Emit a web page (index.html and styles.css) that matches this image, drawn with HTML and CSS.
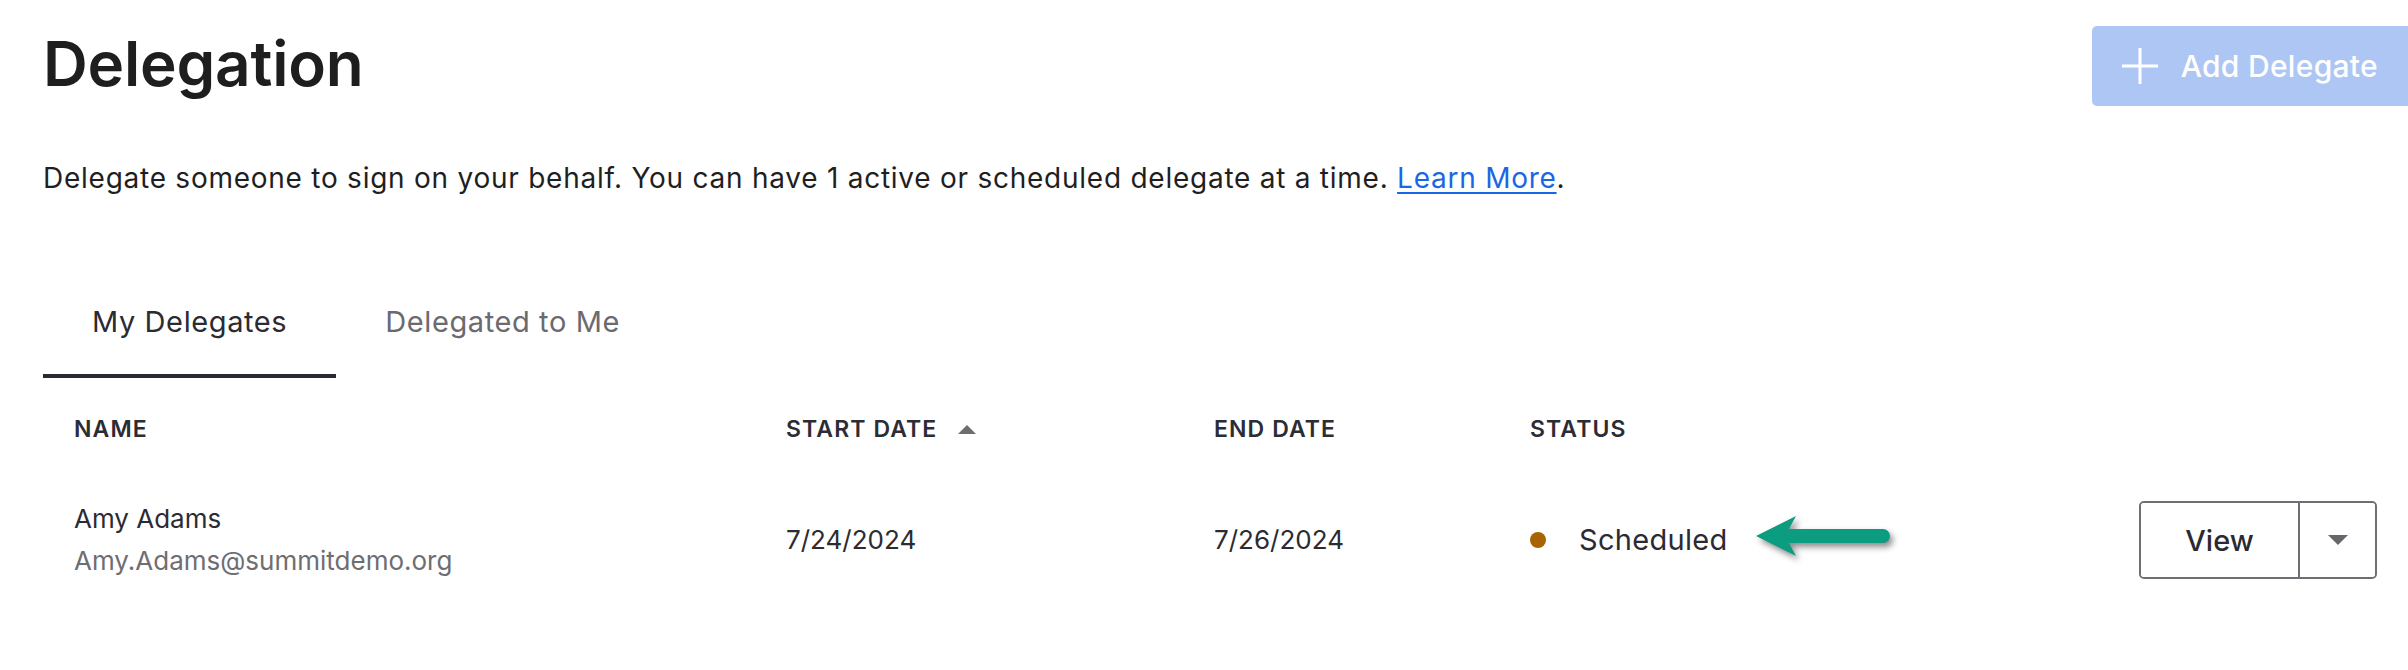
FILE: index.html
```html
<!DOCTYPE html>
<html lang="en">
<head>
<meta charset="utf-8">
<title>Delegation</title>
<link rel="stylesheet" href="styles.css">
</head>
<body>
<div class="page">
  <header class="top">
    <h1 class="title">Delegation</h1>
    <button class="add-btn" type="button">
      <svg class="plus" width="36" height="36" viewBox="0 0 36 36" aria-hidden="true"><path d="M18 0V36M0 18H36" stroke="#fff" stroke-width="3" fill="none"/></svg>
      <span>Add Delegate</span>
    </button>
  </header>

  <p class="intro">Delegate someone to sign on your behalf. You can have 1 active or scheduled delegate at a time. <a href="#">Learn More</a>.</p>

  <nav class="tabs">
    <div class="tab active">My Delegates</div>
    <div class="tab">Delegated to Me</div>
  </nav>

  <div class="table">
    <div class="thead">
      <div class="cell first">Name</div>
      <div class="cell sort">Start Date
        <svg class="sort-icon" width="18" height="9" viewBox="0 0 18 9" aria-hidden="true"><path d="M9 0L18 9H0Z" fill="#6e6e72"/></svg>
      </div>
      <div class="cell">End Date</div>
      <div class="cell">Status</div>
      <div class="cell"></div>
      <div class="cell"></div>
    </div>
    <div class="trow">
      <div class="cell first person">
        <div class="pname">Amy Adams</div>
        <div class="pmail">Amy.Adams@summitdemo.org</div>
      </div>
      <div class="cell">7/24/2024</div>
      <div class="cell">7/26/2024</div>
      <div class="cell status">
        <span class="dot"></span>
        <span class="status-text">Scheduled</span>
        <svg class="arrow" width="150" height="64" viewBox="0 0 150 64" aria-hidden="true"><path d="M4 28L44 8L37 21H131A7 7 0 0 1 131 35H37L44 48Z" fill="#0c9c7f"/></svg>
      </div>
      <div class="cell"></div>
      <div class="cell actions">
        <div class="split">
          <button class="split-main" type="button">View</button>
          <button class="split-caret" type="button" aria-label="More"><svg width="20" height="10" viewBox="0 0 20 10" aria-hidden="true"><path d="M0 0H20L10 10Z" fill="#66666b"/></svg></button>
        </div>
      </div>
    </div>
  </div>
</div>
</body>
</html>
```
FILE: styles.css
```css
html, body {
  margin: 0;
  padding: 0;
  background: #ffffff;
  overflow: hidden;
}

body {
  font-family: Inter, "Liberation Sans", sans-serif;
  color: #2b2b33;
}

.page {
  padding-left: 43px;
}

.top {
  display: flex;
  justify-content: space-between;
  align-items: flex-start;
  padding-top: 26px;
}

.title {
  margin: 0;
  font-size: 62px;
  font-weight: 600;
  line-height: 75px;
  color: #1e1e1e;
  letter-spacing: -0.2px;
}

.add-btn {
  display: flex;
  align-items: center;
  gap: 23px;
  height: 80px;
  padding: 0 36px 0 30px;
  margin-right: -6px;
  border: 0;
  border-radius: 5px;
  background: #aec6f3;
  color: #ffffff;
  font-family: Inter, "Liberation Sans", sans-serif;
  font-size: 30px;
  font-weight: 500;
  letter-spacing: 0.3px;
}

.plus {
  display: block;
  flex: none;
}

.intro {
  margin: 52px 0 0;
  font-size: 28px;
  line-height: 40px;
  letter-spacing: 0.75px;
  color: #1f1f1f;
}

.intro a {
  color: #1b66e6;
  text-decoration: underline;
  text-decoration-thickness: 2px;
  text-underline-offset: 4px;
}

.tabs {
  display: flex;
  margin-top: 104px;
}

.tab {
  padding: 0 49px 32px;
  font-size: 29px;
  line-height: 40px;
  letter-spacing: 0.6px;
  color: #6a6a70;
  border-bottom: 4px solid transparent;
}

.tab.active {
  color: #2b2b33;
  border-bottom-color: #2a2a34;
}

.table {
  margin-right: 31px;
}

.thead,
.trow {
  display: grid;
  grid-template-columns: 743px 428px 316px 1fr 0 auto;
}

.thead {
  padding: 35px 0 53px;
  font-size: 23px;
  line-height: 32px;
  font-weight: 600;
  letter-spacing: 1.1px;
  text-transform: uppercase;
  color: #2c2c35;
}

.trow {
  align-items: center;
  min-height: 84px;
  font-size: 26px;
  line-height: 42px;
  color: #2b2b33;
}

.cell.first {
  padding-left: 31px;
}

.sort {
  display: flex;
  align-items: center;
}

.sort-icon {
  display: block;
  margin-left: 21px;
}

.pname {
  color: #2b2b33;
}

.pmail {
  color: #6e6e72;
}

.status {
  display: flex;
  align-items: center;
}

.dot {
  width: 16px;
  height: 16px;
  border-radius: 50%;
  background: #a86400;
  margin-right: 33px;
  flex: none;
}

.status-text {
  font-size: 29px;
  letter-spacing: 0.3px;
}

.arrow {
  display: block;
  margin-left: 24px;
  filter: drop-shadow(3px 4px 3px rgba(0, 0, 0, 0.45));
  flex: none;
}

.actions {
  justify-self: end;
}

.split {
  display: flex;
  height: 78px;
  box-sizing: border-box;
  border: 2px solid #6e6e74;
  border-radius: 5px;
  overflow: hidden;
}

.split-main,
.split-caret {
  border: 0;
  margin: 0;
  padding: 0;
  background: #ffffff;
  font-family: Inter, "Liberation Sans", sans-serif;
}

.split-main {
  width: 157px;
  font-size: 29px;
  font-weight: 500;
  color: #2a2a30;
}

.split-caret {
  width: 77px;
  box-sizing: border-box;
  border-left: 2px solid #6e6e74;
  display: flex;
  align-items: center;
  justify-content: center;
}

.split-caret svg {
  display: block;
}
```
